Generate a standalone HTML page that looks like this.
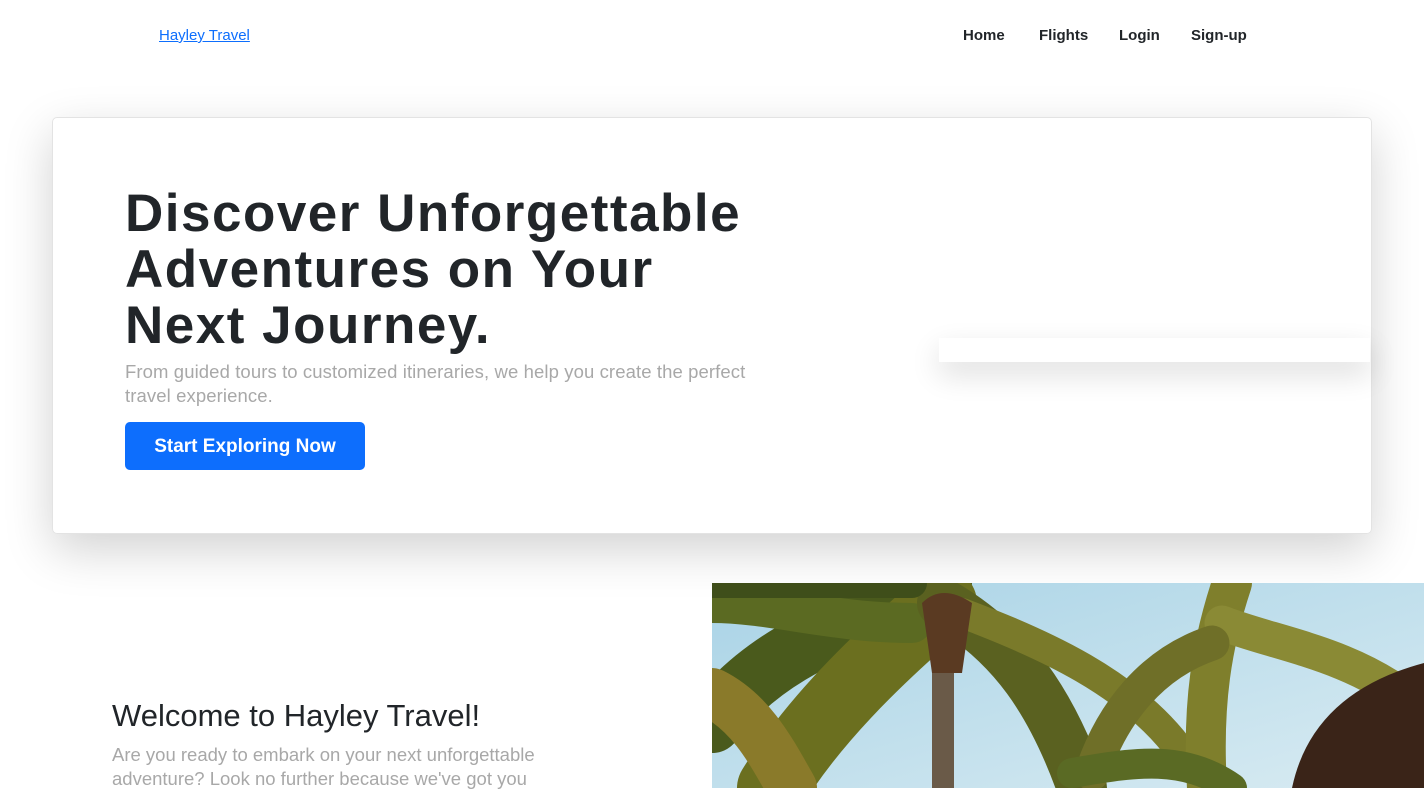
<!DOCTYPE html>
<html><head><meta charset="utf-8"><style>
*{margin:0;padding:0;box-sizing:border-box}
body{width:1424px;height:788px;overflow:hidden;background:#fff;font-family:"Liberation Sans",sans-serif;position:relative;color:#212529}
.brand{position:absolute;left:159px;top:27px;font-size:15px;color:#0d6efd;text-decoration:underline}
.nav{position:absolute;top:27px;font-size:15px;font-weight:bold;color:#212529}
.card{position:absolute;left:52px;top:117px;width:1320px;height:417px;border:1px solid #e3e3e3;border-radius:5px;box-shadow:0 16px 48px rgba(0,0,0,.18)}
h1{position:absolute;left:125px;top:186px;font-size:53px;line-height:56px;font-weight:bold;letter-spacing:1.5px;color:#212529}
.sub{position:absolute;left:125px;top:360px;width:650px;font-size:18.5px;line-height:24px;color:#a8a8a8;letter-spacing:.1px}
.btn{position:absolute;left:125px;top:422px;width:240px;height:48px;background:#0d6efd;border-radius:5px;color:#fff;font-weight:bold;font-size:19px;text-align:center;line-height:50px}
.bar{position:absolute;left:939px;top:338px;width:431px;height:24px;background:#fff;box-shadow:0 12px 30px rgba(0,0,0,.14)}
h2{position:absolute;left:112px;top:698px;font-size:31px;font-weight:normal;color:#212529}
.p2{position:absolute;left:112px;top:743px;width:460px;font-size:18.5px;line-height:24px;color:#a8a8a8}
.img{position:absolute;left:712px;top:583px;width:712px;height:205px;overflow:hidden}
</style></head><body>
<a class="brand">Hayley Travel</a>
<div class="nav" style="left:963px">Home</div>
<div class="nav" style="left:1039px">Flights</div>
<div class="nav" style="left:1119px">Login</div>
<div class="nav" style="left:1191px">Sign-up</div>
<div class="card"></div>
<h1>Discover Unforgettable<br>Adventures on Your<br>Next Journey.</h1>
<div class="sub">From guided tours to customized itineraries, we help you create the perfect travel experience.</div>
<div class="btn">Start Exploring Now</div>
<div class="bar"></div>
<h2>Welcome to Hayley Travel!</h2>
<div class="p2">Are you ready to embark on your next unforgettable adventure? Look no further because we've got you</div>
<div class="img"><svg width="712" height="205" viewBox="0 0 712 205">
<defs><linearGradient id="s" x1="0" y1="0" x2="1" y2="1"><stop offset="0" stop-color="#a9d3e6"/><stop offset="1" stop-color="#d8ebf2"/></linearGradient></defs>
<rect width="712" height="205" fill="url(#s)"/>
<g stroke-linecap="round" fill="none">
<path d="M230 0 C150 40 60 60 0 140" stroke="#4a5a1c" stroke-width="60"/>
<path d="M230 20 C160 80 100 140 60 205" stroke="#6b6f1f" stroke-width="70"/>
<path d="M0 20 C60 20 120 40 200 40" stroke="#5b6a22" stroke-width="40"/>
<path d="M230 20 C300 60 340 120 370 205" stroke="#5a6120" stroke-width="50"/>
<path d="M250 30 C330 60 420 100 470 170" stroke="#7a7a2a" stroke-width="30"/>
<path d="M0 110 C40 130 60 170 80 205" stroke="#8a7a2a" stroke-width="50"/>
<path d="M520 0 C500 60 490 120 495 205" stroke="#7f7f2c" stroke-width="40"/>
<path d="M510 40 C560 60 640 70 700 120" stroke="#8a8a35" stroke-width="35"/>
<path d="M500 60 C440 80 400 130 380 190" stroke="#6f6f28" stroke-width="35"/>
<path d="M360 190 C420 180 470 170 520 205" stroke="#5a6a24" stroke-width="30"/>
<path d="M0 0 C60 0 120 0 200 0" stroke="#3f4e1a" stroke-width="30"/>
</g>
<rect x="220" y="60" width="22" height="150" fill="#6a5a48"/>
<path d="M210 20 Q230 0 260 20 L250 90 L220 90Z" fill="#5a3a22"/>
<path d="M712 80 Q600 110 580 205 L712 205Z" fill="#3a2418"/>
</svg></div>
</body></html>
